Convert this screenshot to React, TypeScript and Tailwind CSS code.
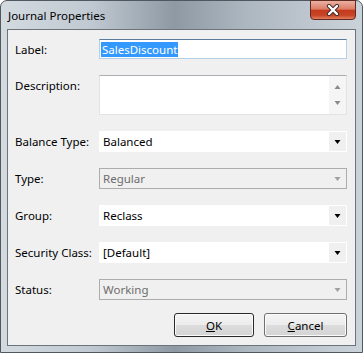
const font = { fontFamily: '"Segoe UI", "Noto Sans", "Open Sans", sans-serif' };

function Arrow({ down = true, color = '#000' }: { down?: boolean; color?: string }) {
  return (
    <svg width="7" height="4" viewBox="0 0 7 4" className="block">
      {down ? (
        <polygon points="0.5,0 6.5,0 3.5,4" fill={color} />
      ) : (
        <polygon points="3.5,0 6.5,4 0.5,4" fill={color} />
      )}
    </svg>
  );
}

function Select({ value, disabled = false }: { value: string; disabled?: boolean }) {
  return (
    <div
      className={
        disabled
          ? 'flex h-[21px] items-center border border-[#adadad] bg-[#f0f0f0] pl-[3px] text-[#6d6d6d]'
          : 'flex h-[21px] items-center border border-white bg-white pl-[3px] text-black'
      }
    >
      <span className="flex-1">{value}</span>
      <div
        className={
          disabled
            ? 'flex h-full w-[17px] items-center justify-center'
            : 'flex h-full w-[17px] items-center justify-center bg-[#f0f0f0]'
        }
      >
        <Arrow color={disabled ? '#a0a0a0' : '#000'} />
      </div>
    </div>
  );
}

function Row({ label, children, top = false }: { label: string; children: React.ReactNode; top?: boolean }) {
  return (
    <div className={top ? 'flex items-start' : 'flex items-center'}>
      <div className={top ? 'w-[84px] shrink-0 pt-[3px]' : 'w-[84px] shrink-0'}>{label}</div>
      <div className="flex-1">{children}</div>
    </div>
  );
}

export default function App() {
  return (
    <div className="h-[353px] w-[364px] bg-white text-[11.5px] leading-[15px]" style={font}>
      <div className="flex h-full w-[363px] flex-col rounded-t-[7px] border border-[#50575e] bg-[linear-gradient(90deg,#d3dae0_0%,#c0c9d1_25%,#8e99a4_48%,#adb7c0_68%,#cbd3da_100%)] px-[6px] pb-[6px]">
        <div className="flex h-[28px] items-start justify-between">
          <div className="pl-[1px] pt-[7px] text-black">Journal Properties</div>
          <div className="-mt-px flex h-[20px] w-[46px] items-center justify-center rounded-b-[4px] border border-[#5f2a20] bg-[linear-gradient(180deg,#eab0a2_0%,#dc7d66_45%,#c6391c_52%,#c84528_80%,#e2805f_100%)]">
            <svg width="14" height="12" viewBox="0 0 14 12">
              <path d="M3 2 L11 10 M11 2 L3 10" stroke="#3a2a28" strokeWidth="4.2" strokeLinecap="round" />
              <path d="M3 2 L11 10 M11 2 L3 10" stroke="#ffffff" strokeWidth="2.4" strokeLinecap="round" />
            </svg>
          </div>
        </div>
        <div className="flex flex-1 flex-col border border-[#6b737b] bg-[#f0f0f0] pl-[7px] pr-[8px] pt-[9px] text-black">
          <div className="flex flex-col gap-4">
            <Row label="Label:">
              <div className="flex h-[20px] items-center border border-[#b5cfe7] border-t-[#5a7b99] bg-white pl-[1px]">
                <span className="bg-[#3399ff] px-[1px] text-white">SalesDiscount</span>
              </div>
            </Row>
            <Row label="Description:" top>
              <div className="flex h-[40px] border border-[#e3e3e3] border-t-[#abadb3] bg-white">
                <div className="flex-1" />
                <div className="flex w-[17px] flex-col items-center justify-between bg-[#f5f5f5] py-[9px]">
                  <Arrow down={false} color="#8a8a8a" />
                  <Arrow color="#8a8a8a" />
                </div>
              </div>
            </Row>
            <Row label="Balance Type:">
              <Select value="Balanced" />
            </Row>
            <Row label="Type:">
              <Select value="Regular" disabled />
            </Row>
            <Row label="Group:">
              <Select value="Reclass" />
            </Row>
            <Row label="Security Class:">
              <Select value="[Default]" />
            </Row>
            <Row label="Status:">
              <Select value="Working" disabled />
            </Row>
          </div>
          <div className="mt-[13px] flex justify-end gap-[10px]">
            <button className="flex h-[24px] w-[80px] items-center justify-center rounded-[3px] border border-[#2a2a2a] bg-[linear-gradient(180deg,#f4f4f4_0%,#ececec_50%,#dcdcdc_52%,#d4d4d4_100%)] shadow-[inset_0_0_0_1px_#fafafa]">
              <span>
                <span className="underline">O</span>K
              </span>
            </button>
            <button className="flex h-[24px] w-[83px] items-center justify-center rounded-[3px] border border-[#707070] bg-[linear-gradient(180deg,#f4f4f4_0%,#ececec_50%,#dcdcdc_52%,#d4d4d4_100%)] shadow-[inset_0_0_0_1px_#fafafa]">
              <span>
                <span className="underline">C</span>ancel
              </span>
            </button>
          </div>
        </div>
      </div>
    </div>
  );
}
